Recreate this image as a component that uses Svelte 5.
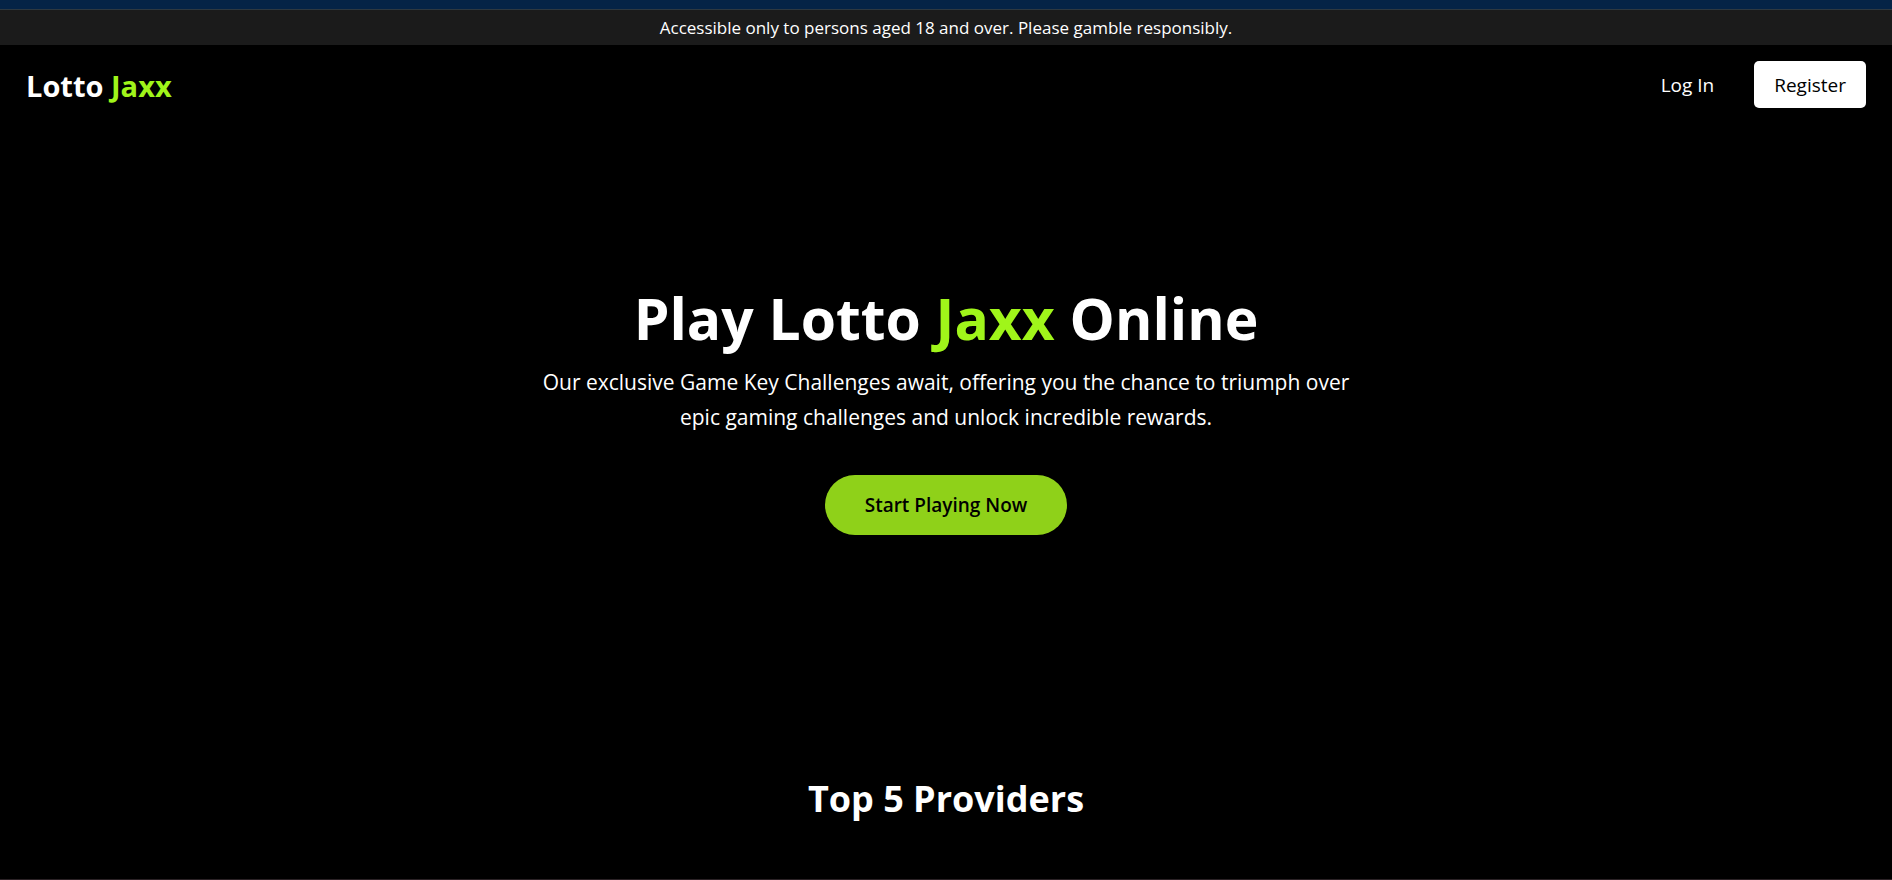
<script>
  const brand = 'Lotto';
  const accent = 'Jaxx';
</script>

<div class="page">
  <div class="strip"></div>
  <p class="notice">Accessible only to persons aged 18 and over. Please gamble responsibly.</p>

  <header>
    <a class="brand" href="#top">{brand} <span class="accent">{accent}</span></a>
    <nav aria-label="Account">
      <a class="login" href="#login">Log In</a>
      <a class="register" href="#register">Register</a>
    </nav>
  </header>

  <main>
    <section class="hero" id="top">
      <h1>Play {brand} <span class="accent">{accent}</span> Online</h1>
      <p class="lead">
        Our exclusive Game Key Challenges await, offering you the chance to triumph over
        epic gaming challenges and unlock incredible rewards.
      </p>
      <button type="button">Start Playing Now</button>
    </section>

    <section class="providers">
      <h2>Top 5 Providers</h2>
    </section>
  </main>
</div>

<style>
  :global(body) {
    background: #000;
  }

  .page {
    min-height: 100vh;
    box-sizing: border-box;
    display: flex;
    flex-direction: column;
    border-bottom: 1px solid #2b2226;
    background: #000;
    color: #fff;
    font-family: "Segoe UI", "Open Sans", "Noto Sans", sans-serif;
    font-size: 19px;
  }

  a {
    color: inherit;
    text-decoration: none;
  }

  h1,
  h2,
  p {
    margin: 0;
  }

  .accent {
    color: #a0f51a;
  }

  .strip {
    height: 9px;
    background: #052346;
  }

  .notice {
    padding: 4px 16px;
    border-top: 1px solid #2e3840;
    background: #1b1b1b;
    font-size: 17px;
    line-height: 27px;
    text-align: center;
  }

  header {
    display: flex;
    align-items: center;
    justify-content: space-between;
    padding: 16px 26px;
  }

  .brand {
    padding-top: 2px;
    font-size: 29px;
    font-weight: 700;
    line-height: 40px;
  }

  nav {
    display: flex;
    align-items: center;
    gap: 40px;
    line-height: 31px;
  }

  .login,
  .register {
    padding: 9px 0 7px;
  }

  .register {
    padding-inline: 20px;
    border-radius: 5px;
    background: #fff;
    color: #000;
  }

  .hero {
    display: flex;
    flex-direction: column;
    align-items: center;
    padding: 158px 24px 160px;
    text-align: center;
  }

  h1 {
    font-size: 57px;
    font-weight: 700;
    line-height: 72px;
  }

  .lead {
    max-width: 840px;
    margin: 11px 0 40px;
    font-size: 21px;
    line-height: 35px;
  }

  button {
    padding: 16px 40px;
    border: 0;
    border-radius: 30px;
    background: #8fd119;
    color: #000;
    font: inherit;
    font-weight: 600;
    line-height: 28px;
    cursor: pointer;
  }

  .providers {
    padding: 80px 24px 32px;
    text-align: center;
  }

  h2 {
    font-size: 36px;
    font-weight: 700;
    line-height: 48px;
  }
</style>
